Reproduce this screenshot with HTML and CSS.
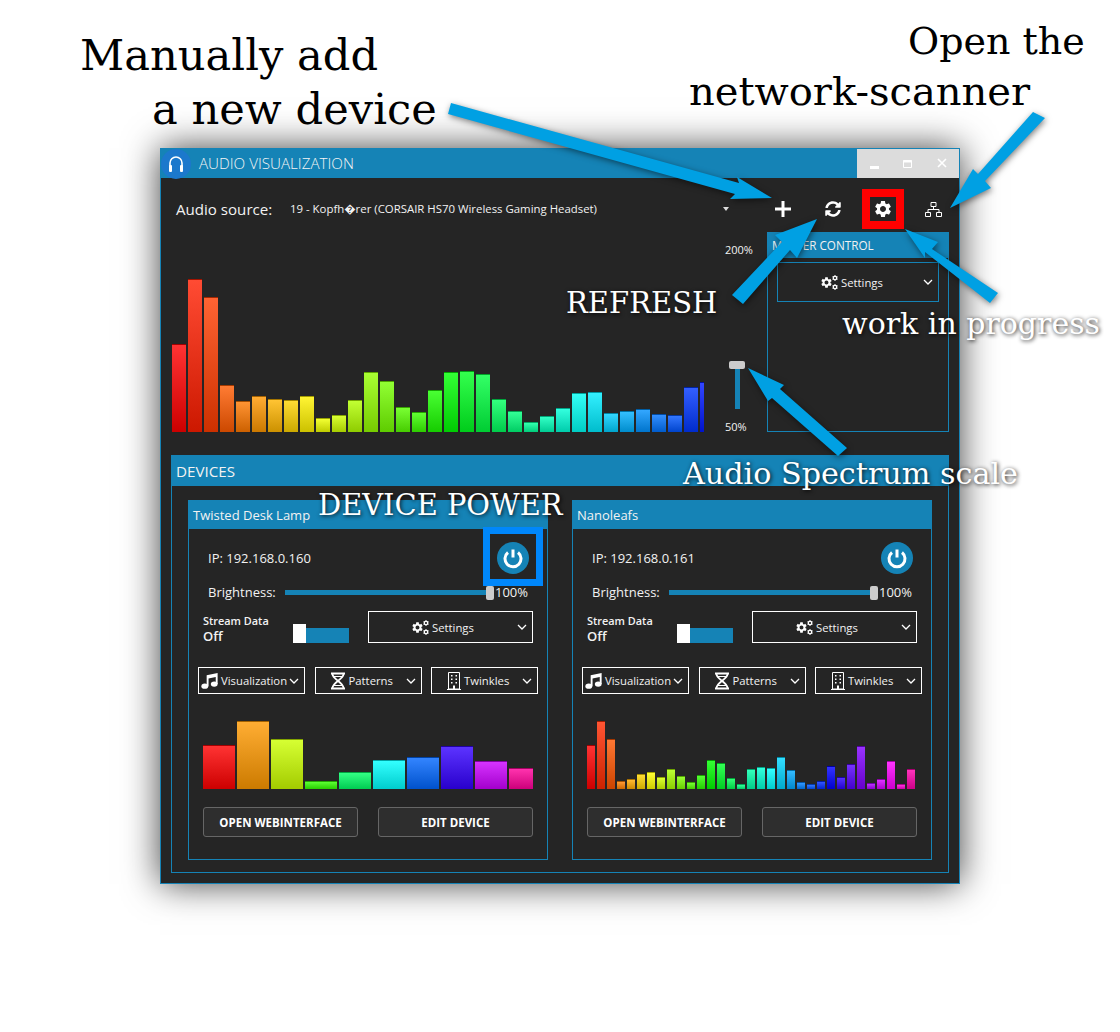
FILE: index.html
```html
<html>

<head>
    <meta charset="utf-8">
    <link rel="stylesheet" href="styles.css">
</head>

<body>
    <svg class="defs" width="0" height="0">
        <symbol id="gear" viewBox="0 0 24 24">
            <path fill-rule="evenodd" d="M19.14 12.94c.04-.3.06-.61.06-.94 0-.32-.02-.64-.07-.94l2.03-1.58c.18-.14.23-.41.12-.61l-1.92-3.32c-.12-.22-.37-.29-.59-.22l-2.39.96c-.5-.38-1.03-.7-1.62-.94l-.36-2.54c-.04-.24-.24-.41-.48-.41h-3.84c-.24 0-.43.17-.47.41l-.36 2.54c-.59.24-1.13.57-1.62.94l-2.39-.96c-.22-.08-.47 0-.59.22L2.74 8.87c-.12.21-.08.47.12.61l2.03 1.58c-.05.3-.09.63-.09.94s.02.64.07.94l-2.03 1.58c-.18.14-.23.41-.12.61l1.92 3.32c.12.22.37.29.59.22l2.39-.96c.5.38 1.03.7 1.62.94l.36 2.54c.05.24.24.41.48.41h3.84c.24 0 .44-.17.47-.41l.36-2.54c.59-.24 1.13-.56 1.62-.94l2.39.96c.22.08.47 0 .59-.22l1.92-3.32c.12-.22.07-.47-.12-.61l-2.01-1.58zM12 15.6c-1.98 0-3.6-1.62-3.6-3.6s1.62-3.6 3.6-3.6 3.6 1.62 3.6 3.6-1.62 3.6-3.6 3.6z"/>
        </symbol>
        <symbol id="cogs" viewBox="0 0 17 15">
            <use href="#gear" x="-1" y="1" width="13" height="13"/>
            <use href="#gear" x="10.5" y="-.5" width="7" height="7"/>
            <use href="#gear" x="10.5" y="8.5" width="7" height="7"/>
        </symbol>
        <symbol id="chevron" viewBox="0 0 10 6">
            <path d="M1 1l4 4 4-4" fill="none" stroke="#fff" stroke-width="1.3"/>
        </symbol>
        <symbol id="music" viewBox="0 0 18 18">
            <ellipse cx="4" cy="15" rx="3.6" ry="2.8"/>
            <ellipse cx="14" cy="12.8" rx="3.6" ry="2.8"/>
            <path d="M6 15V3.4L17.6 1v11.8h-2V5.2L8 6.8V15z"/>
        </symbol>
        <symbol id="dna" viewBox="0 0 16 18">
            <path d="M1 1.5h14M1 16.5h14" fill="none" stroke="#fff" stroke-width="2"/>
            <path d="M2.5 2c0 5.500 11 8 11 14M13.500 2c0 5.500-11 8-11 14" fill="none" stroke="#fff" stroke-width="1.800"/>
            <path d="M4 4.500h8M4 13.500h8" fill="none" stroke="#fff" stroke-width="1.200"/>
        </symbol>
        <symbol id="building" viewBox="0 0 14 18">
            <path d="M1.500 .5h11v16.500h-11zM0 17.500h14" fill="none" stroke="#fff"/>
            <path d="M4 3h1.500v1.500H4zM8.500 3H10v1.500H8.500zM4 6.500h1.500V8H4zM8.500 6.500H10V8H8.500zM4 10h1.500v1.500H4zM8.500 10H10v1.500H8.500zM6 13.500h2V17H6z"/>
        </symbol>
    </svg>

    <div class="window">
        <div class="titlebar">
            <div class="logo">
                <svg width="20" height="20" viewBox="0 0 20 20">
                    <path d="M4 12V9a6 6 0 0 1 12 0v3" fill="none" stroke="#fff" stroke-width="1.600"/>
                    <rect x="3" y="11" width="3" height="7" rx="1" fill="#fff"/>
                    <rect x="14" y="11" width="3" height="7" rx="1" fill="#fff"/>
                </svg>
            </div>
            <div class="app-title">AUDIO VISUALIZATION</div>
            <div class="window-buttons">
                <svg width="102" height="29" viewBox="0 0 102 29">
                    <rect x="13" y="17" width="9" height="3" fill="#fff"/>
                    <path d="M46.500 11.500h8v7h-8z" fill="none" stroke="#fff"/>
                    <path d="M46 12.500h9" stroke="#fff" stroke-width="2"/>
                    <path d="M81 10l8 8M89 10l-8 8" stroke="#fff" stroke-width="1.600"/>
                </svg>
            </div>
        </div>

        <div class="toolbar">
            <div class="source-label">Audio source:</div>
            <div class="source-value">19 - Kopfh�rer (CORSAIR HS70 Wireless Gaming Headset)</div>
            <div class="source-arrow"></div>
            <div class="tool">
                <svg width="16" height="16" viewBox="0 0 16 16">
                    <path d="M8 0v16M0 8h16" stroke="#fff" stroke-width="3"/>
                </svg>
            </div>
            <div class="tool">
                <svg width="16" height="16" viewBox="0 0 512 512" fill="#fff">
                    <path d="M370.72 133.28C339.458 104.008 298.888 87.962 255.848 88c-77.458.068-144.328 53.178-162.791 126.85-1.344 5.363-6.122 9.15-11.651 9.15H24.103c-7.498 0-13.194-6.807-11.807-14.176C33.933 94.924 134.813 8 256 8c66.448 0 126.791 26.136 171.315 68.685L463.03 40.97C478.149 25.851 504 36.559 504 57.941V192c0 13.255-10.745 24-24 24H345.941c-21.382 0-32.09-25.851-16.971-40.971l41.75-41.749zM32 296h134.059c21.382 0 32.09 25.851 16.971 40.971l-41.75 41.75c31.262 29.273 71.835 45.319 114.876 45.28 77.418-.07 144.315-53.144 162.787-126.849 1.344-5.363 6.122-9.15 11.651-9.15h57.304c7.498 0 13.194 6.807 11.807 14.176C478.067 417.076 377.187 504 256 504c-66.448 0-126.791-26.136-171.315-68.685L48.97 471.03C33.851 486.149 8 475.441 8 454.059V320c0-13.255 10.745-24 24-24z"/>
                </svg>
            </div>
            <div class="tool">
                <div class="red-mark">
                    <svg width="20" height="20" fill="#fff"><use href="#gear"/></svg>
                </div>
            </div>
            <div class="tool">
                <svg width="17" height="15" viewBox="0 0 17 15" fill="none" stroke="#fff">
                    <path d="M6 .5h5v4H6zM.5 10.500h5v4h-5zM11.500 10.500h5v4h-5zM8.500 4.500v3M3 10.500v-3h11v3"/>
                </svg>
            </div>
        </div>

        <div class="spectrum-row">
            <div class="spectrum">
                <div class="chart chart-main" id="main-chart"></div>
            </div>
            <div class="scale">
                <div class="scale-max">200%</div>
                <div class="scale-thumb"></div>
                <div class="scale-track"></div>
                <div class="scale-min">50%</div>
            </div>
            <div class="master">
                <div class="panel-head">MASTER CONTROL</div>
                <div class="drop drop-settings drop-blue">
                    <svg class="cogs" width="17" height="15" fill="#fff"><use href="#cogs"/></svg>
                    <span>Settings</span>
                    <svg class="chev" width="10" height="6"><use href="#chevron"/></svg>
                </div>
            </div>
        </div>

        <div class="devices">
            <div class="devices-head">DEVICES</div>
            <div class="devices-body" id="devices"></div>
        </div>
    </div>

    <!-- annotations drawn on top of the app screenshot -->
    <svg class="arrows" width="1120" height="1032" fill="#00a0e3">
        <polygon points="451,103 739,183 737,177 772,198 730,199 735,194 448,114"/>
        <polygon points="1033,112 1045,118 985,181 991,188 950,208 973,169 978,174"/>
        <polygon points="817,219 775,235 782,242 732,295 743,304 790,250 797,258"/>
        <polygon points="905,229 938,242 932,249 998,293 990,303 925,252 925,258"/>
        <polygon points="748,368 784,385 780,389 847,448 838,456 772,398 768,401"/>
    </svg>

    <div class="note note-dark note-add">Manually add<br><span class="indent">a new device</span></div>
    <div class="note note-dark note-open">Open the</div>
    <div class="note note-dark note-scan">network-scanner</div>
    <div class="note note-light note-refresh">REFRESH</div>
    <div class="note note-light note-wip">work in progress</div>
    <div class="note note-light note-scale">Audio Spectrum scale</div>
    <div class="note note-light note-power">DEVICE POWER</div>

    <script src="script.js"></script>
</body>

</html>
```

FILE: styles.css
```css
html {
    height: 100%;
}

body {
    box-sizing: border-box;
    height: 100%;
    margin: 0;
    padding: 148px 0 0 160px;
    background: #fff;
    font-family: "Open Sans", "DejaVu Sans", sans-serif;
    color: #f2f2f2;
}

.defs {
    position: absolute;
}

.window {
    position: relative;
    width: 798px;
    height: 734px;
    background: #252525;
    border: 1px solid #1583b6;
    box-shadow: 0 0 34px rgba(0, 0, 0, 0.75);
}

.titlebar {
    display: flex;
    align-items: center;
    height: 29px;
    background: #1583b6;
}

.logo {
    display: flex;
    align-items: center;
    justify-content: center;
    width: 30px;
    height: 30px;
    border-radius: 50%;
    background: #1c78cc;
}

.app-title {
    margin-left: 8px;
    padding-bottom: 2px;
    font-size: 15.200px;
    font-weight: 300;
    color: #f4f4f4;
}

.window-buttons {
    margin-left: auto;
    height: 29px;
    background: #dcdcdc;
}

.toolbar {
    display: flex;
    align-items: center;
    box-sizing: border-box;
    height: 54px;
    padding: 8px 0 0 15px;
}

.source-label {
    width: 114px;
    font-size: 15.100px;
}

.source-value {
    width: 433px;
    padding-bottom: 2px;
    font-size: 11.400px;
}

.source-arrow {
    width: 0;
    height: 0;
    margin-right: 29px;
    border-left: 3px solid transparent;
    border-right: 3px solid transparent;
    border-top: 4px solid #ddd;
}

.tool {
    display: flex;
    align-items: center;
    justify-content: center;
    width: 50px;
}

.red-mark {
    display: flex;
    align-items: center;
    justify-content: center;
    width: 26px;
    height: 24px;
    outline: 8px solid #f00;
}

.spectrum-row {
    display: flex;
    height: 200px;
    padding-left: 11px;
}

.spectrum {
    display: flex;
    align-items: flex-end;
    width: 553px;
}

.chart {
    display: flex;
    align-items: flex-end;
    overflow: hidden;
    gap: 2px;
}

.chart div {
    flex-shrink: 0;
    box-sizing: border-box;
    border-top: 1px solid rgba(0, 0, 0, 0.2);
}

.chart-main {
    width: 532px;
    height: 160px;
}

.chart-main div {
    width: 14px;
}

.scale {
    width: 42px;
    font-size: 11px;
    line-height: 14px;
}

.scale-max {
    margin-top: 11px;
}

.scale-thumb {
    width: 16px;
    height: 8px;
    margin: 104px 0 0 4px;
    border-radius: 2px;
    background: #ccc;
}

.scale-track {
    width: 5px;
    height: 40px;
    margin-left: 10px;
    background: #1583b6;
}

.scale-min {
    margin-top: 11px;
}

.master {
    box-sizing: border-box;
    width: 182px;
    height: 200px;
    border: 1px solid #1583b6;
}

.panel-head {
    height: 25px;
    padding-left: 4px;
    background: #1583b6;
    font-size: 11.700px;
    line-height: 25px;
}

.drop {
    display: flex;
    align-items: center;
    box-sizing: border-box;
    border: 1px solid #fff;
    font-size: 11.300px;
}

.drop .chev {
    margin-left: auto;
}

.drop-blue {
    border-color: #1583b6;
}

.drop-settings {
    padding: 0 5px 0 43px;
}

.drop-settings .cogs {
    margin-right: 3px;
}

.master .drop {
    height: 40px;
    margin: 4px 9px 0;
}

.devices {
    margin: 23px 10px 0;
}

.devices-head {
    height: 31px;
    padding-left: 5px;
    background: #1583b6;
    font-size: 15.200px;
    line-height: 33px;
}

.devices-body {
    display: flex;
    gap: 24px;
    box-sizing: border-box;
    height: 387px;
    padding: 14px 16px 0;
    border: 1px solid #1583b6;
    border-top: 0;
}

.device {
    box-sizing: border-box;
    width: 360px;
    height: 360px;
    border: 1px solid #1583b6;
}

.device-head {
    height: 28px;
    padding-left: 4px;
    background: #1583b6;
    font-size: 13px;
    line-height: 28px;
}

.device-body {
    padding: 0 14px;
    font-size: 13px;
}

.ip-row {
    display: flex;
    align-items: center;
    justify-content: space-between;
    height: 32px;
    padding: 0 4px 0 5px;
    margin-top: 13px;
}

.power {
    position: relative;
    width: 32px;
    height: 32px;
    border-radius: 50%;
    background: #1583b6;
}

.power svg {
    display: block;
}

.blue-mark {
    position: absolute;
    left: -14px;
    top: -15px;
    width: 46px;
    height: 45px;
    border: 7px solid #0087fb;
}

.brightness {
    display: flex;
    align-items: center;
    height: 15px;
    margin: 11px -8px 0 0;
    padding-left: 5px;
}

.brightness-label {
    width: 77px;
    padding-bottom: 2px;
}

.brightness-track {
    width: 201px;
    height: 5px;
    background: #1583b6;
}

.brightness-thumb {
    width: 8px;
    height: 14px;
    border-radius: 2px;
    background: #ccc;
}

.brightness-value {
    margin-left: 1px;
    padding-bottom: 2px;
}

.stream-row {
    display: flex;
    height: 32px;
    margin-top: 11px;
}

.stream-text {
    width: 90px;
    font-weight: 600;
    font-size: 10.900px;
    line-height: 13px;
    padding-top: 3px;
}

.stream-text b {
    display: block;
    font-weight: 600;
    font-size: 13px;
    line-height: 19px;
}

.toggle {
    position: relative;
    width: 56px;
    height: 15px;
    margin: 17px 19px 0 0;
    background: #1583b6;
}

.toggle::before {
    content: "";
    position: absolute;
    left: 0;
    top: -4px;
    width: 13px;
    height: 19px;
    background: #fff;
}

.stream-row .drop {
    width: 165px;
}

.drop-row {
    display: flex;
    justify-content: space-between;
    margin: 24px -5px 0;
}

.drop-row .drop {
    width: 107px;
    height: 27px;
    padding: 0 5px 0 14px;
}

.drop-row .drop-tight {
    padding-left: 2px;
}

.drop-row .drop > svg:first-child {
    margin-right: 3px;
}

.drop-row .drop-pad {
    padding-left: 15px;
}

.chart-device {
    width: 330px;
    height: 68px;
    margin-top: 27px;
}

.chart-wide div {
    width: 32px;
}

.chart-thin div {
    width: 8px;
}

.actions {
    display: flex;
    justify-content: space-between;
    margin-top: 18px;
}

.actions button {
    width: 155px;
    height: 30px;
    padding: 0;
    border: 1px solid #666;
    border-radius: 3px;
    background: #2e2e2e;
    color: #fff;
    font-family: "Open Sans", sans-serif;
    font-size: 11.500px;
    font-weight: 700;
}

.arrows {
    position: absolute;
    left: 0;
    top: 0;
    filter: drop-shadow(1px 2px 3px rgba(0, 0, 0, 0.5));
}

.note {
    position: absolute;
    font-family: "DejaVu Serif", serif;
    white-space: nowrap;
}

.note-dark {
    color: #000;
    line-height: 54px;
}

.note-light {
    color: #fff;
    line-height: 36px;
    text-shadow: 1px 1px 4px rgba(0, 0, 0, 0.9);
}

.indent {
    margin-left: 72px;
}

.note-add {
    left: 80px;
    top: 28px;
    font-size: 43.200px;
}

.note-open {
    left: 908px;
    top: 14px;
    font-size: 38px;
}

.note-scan {
    left: 689px;
    top: 64px;
    font-size: 40px;
}

.note-refresh {
    left: 566px;
    top: 285px;
    font-size: 29px;
}

.note-wip {
    left: 842px;
    top: 306px;
    font-size: 30px;
}

.note-scale {
    left: 683px;
    top: 456px;
    font-size: 30.200px;
}

.note-power {
    left: 318px;
    top: 487px;
    font-size: 28.900px;
}
```

FILE: script.js
```js
const mainBars = [88, 153, 135, 47, 31, 36, 33, 32, 36, 14, 17, 32, 60, 51, 25, 20, 42, 60, 61, 58, 33, 21, 10, 16, 24, 39, 40, 19, 21, 23, 18, 17, 45, 50];
const lampBars = [44, 68, 50, 8, 17, 29, 32, 43, 28, 21];
const leafBars = [44, 68, 50, 8, 10, 15, 17, 12, 20, 13, 7, 14, 29, 26, 11, 5, 20, 22, 21, 32, 19, 7, 5, 8, 23, 12, 25, 43, 6, 10, 28, 5, 20];

function fillChart(chart, bars, hueStep) {
    bars.forEach((height, i) => {
        const hue = i * hueStep;
        const bar = document.createElement('div');
        bar.style.height = height + 'px';
        bar.style.background = `linear-gradient(hsl(${hue}, 100%, 60%), hsl(${hue}, 100%, 40%))`;
        chart.appendChild(bar);
    });
}

function deviceCard(name, ip, chartClass, marked) {
    return `
    <div class="device">
        <div class="device-head">${name}</div>
        <div class="device-body">
            <div class="ip-row">
                <span>IP: ${ip}</span>
                <div class="power">
                    <svg width="32" height="32" viewBox="0 0 32 32" fill="none" stroke="#fff" stroke-width="3">
                        <path d="M11 10.500a8 8 0 1 0 10 0M16 7.500v8"/>
                    </svg>
                    ${marked ? '<div class="blue-mark"></div>' : ''}
                </div>
            </div>
            <div class="brightness">
                <div class="brightness-label">Brightness:</div>
                <div class="brightness-track"></div>
                <div class="brightness-thumb"></div>
                <div class="brightness-value">100%</div>
            </div>
            <div class="stream-row">
                <div class="stream-text">Stream Data<b>Off</b></div>
                <div class="toggle"></div>
                <div class="drop drop-settings">
                    <svg class="cogs" width="17" height="15" fill="#fff"><use href="#cogs"/></svg>
                    <span>Settings</span>
                    <svg class="chev" width="10" height="6"><use href="#chevron"/></svg>
                </div>
            </div>
            <div class="drop-row">
                <div class="drop drop-tight">
                    <svg width="17" height="17" fill="#fff"><use href="#music"/></svg>
                    <span>Visualization</span>
                    <svg class="chev" width="10" height="6"><use href="#chevron"/></svg>
                </div>
                <div class="drop">
                    <svg width="16" height="18"><use href="#dna"/></svg>
                    <span>Patterns</span>
                    <svg class="chev" width="10" height="6"><use href="#chevron"/></svg>
                </div>
                <div class="drop drop-pad">
                    <svg width="14" height="18" fill="#fff"><use href="#building"/></svg>
                    <span>Twinkles</span>
                    <svg class="chev" width="10" height="6"><use href="#chevron"/></svg>
                </div>
            </div>
            <div class="chart chart-device ${chartClass}"></div>
            <div class="actions">
                <button>OPEN WEBINTERFACE</button>
                <button>EDIT DEVICE</button>
            </div>
        </div>
    </div>`;
}

fillChart(document.querySelector('#main-chart'), mainBars, 7.1);

const devices = document.querySelector('#devices');
devices.innerHTML = deviceCard('Twisted Desk Lamp', '192.168.0.160', 'chart-wide', true)
    + deviceCard('Nanoleafs', '192.168.0.161', 'chart-thin', false);

fillChart(devices.querySelector('.chart-wide'), lampBars, 36);
fillChart(devices.querySelector('.chart-thin'), leafBars, 10);
```
